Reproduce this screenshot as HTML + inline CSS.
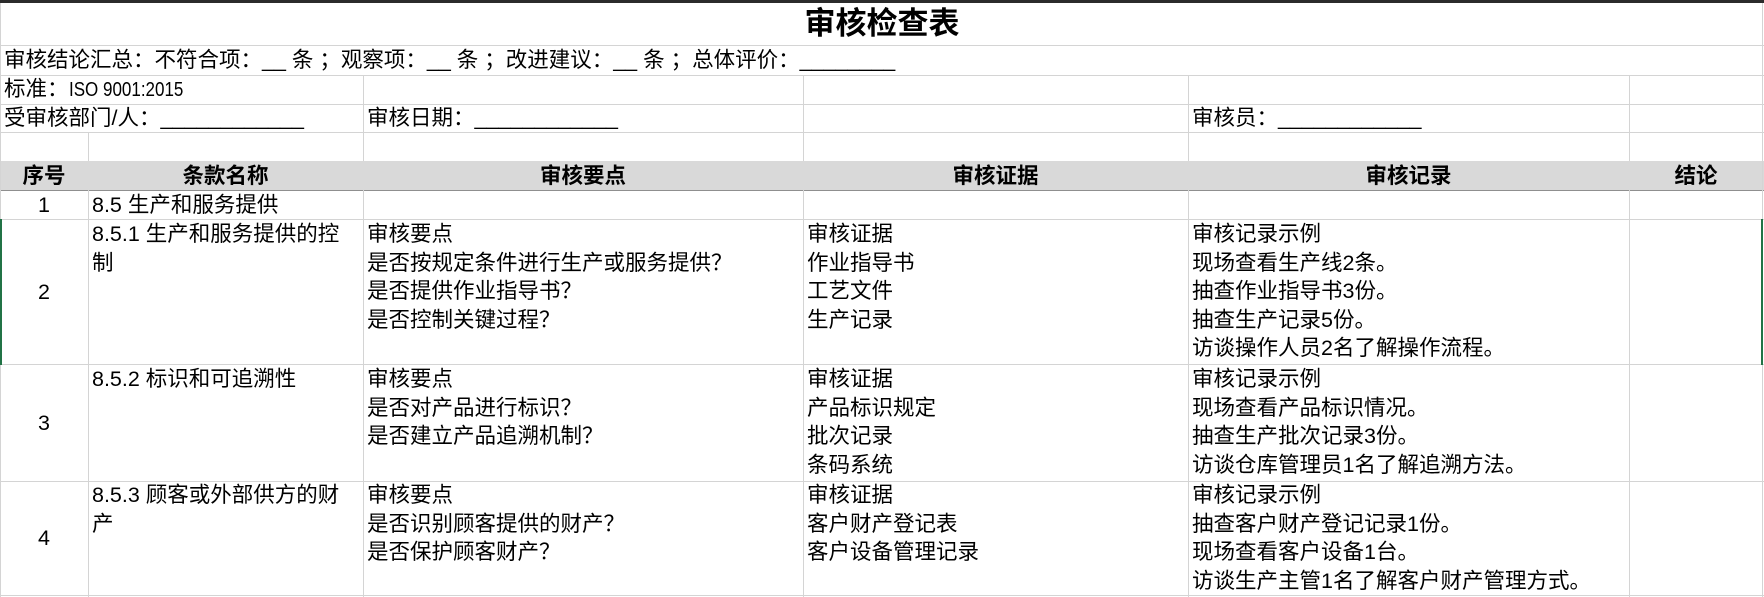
<!DOCTYPE html>
<html><head><meta charset="utf-8"><style>
*{margin:0;padding:0;box-sizing:border-box}
body{width:1764px;height:597px;overflow:hidden;background:#fff;position:relative;font-family:"Liberation Sans","Noto Sans CJK SC",sans-serif;font-size:21.5px;color:#000}
.h{position:absolute;height:1px;background:#d4d4d4}
.v{position:absolute;width:1px;background:#d4d4d4}
.t{position:absolute;white-space:nowrap;line-height:28.6px}
.c{text-align:center}
.b{font-weight:bold}
</style></head><body>
<div style="position:absolute;left:0;top:0;width:1764px;height:3px;background:#2b2b2b"></div>
<div class="t b c" style="left:0;top:4px;width:1764px;line-height:40px;font-size:31px">审核检查表</div>
<div class="h" style="left:0;top:45px;width:1764px"></div>
<div class="h" style="left:0;top:75px;width:1764px"></div>
<div class="h" style="left:0;top:104px;width:1764px"></div>
<div class="h" style="left:0;top:132px;width:1764px"></div>
<div style="position:absolute;left:0;top:161px;width:1764px;height:29px;background:#d9d9d9"></div>
<div class="h" style="left:0;top:190px;width:1764px;background:#8f8f8f"></div>
<div class="h" style="left:0;top:219px;width:1764px"></div>
<div class="h" style="left:0;top:364px;width:1764px"></div>
<div class="h" style="left:0;top:481px;width:1764px"></div>
<div class="h" style="left:0;top:595px;width:1764px"></div>
<div class="v" style="left:0;top:3px;height:594px"></div>
<div class="v" style="left:1762px;top:3px;height:594px"></div>
<div class="v" style="left:363px;top:75px;height:57px"></div>
<div class="v" style="left:803px;top:75px;height:57px"></div>
<div class="v" style="left:1188px;top:75px;height:57px"></div>
<div class="v" style="left:1629px;top:75px;height:57px"></div>
<div class="v" style="left:88px;top:132px;height:29px"></div>
<div class="v" style="left:363px;top:132px;height:29px"></div>
<div class="v" style="left:803px;top:132px;height:29px"></div>
<div class="v" style="left:1188px;top:132px;height:29px"></div>
<div class="v" style="left:1629px;top:132px;height:29px"></div>
<div class="v" style="left:88px;top:190px;height:407px"></div>
<div class="v" style="left:363px;top:190px;height:407px"></div>
<div class="v" style="left:803px;top:190px;height:407px"></div>
<div class="v" style="left:1188px;top:190px;height:407px"></div>
<div class="v" style="left:1629px;top:190px;height:407px"></div>
<div style="position:absolute;left:0;top:219px;width:2px;height:146px;background:#217346"></div>
<div style="position:absolute;left:1761px;top:219px;width:2px;height:146px;background:#217346"></div>

<div class="t" style="left:4px;top:46px">审核结论汇总：不符合项：__ 条 ；观察项：__ 条 ；改进建议：__ 条 ；总体评价：________</div>
<div class="t" style="left:4px;top:75px">标准：<span style="display:inline-block;font-size:20px;transform:scaleX(0.85);transform-origin:left">ISO 9001:2015</span></div>
<div class="t" style="left:4px;top:104px">受审核部门/人：____________</div>
<div class="t" style="left:367px;top:104px">审核日期：____________</div>
<div class="t" style="left:1192px;top:104px">审核员：____________</div>

<div class="t b c" style="left:0;top:162px;width:88px">序号</div>
<div class="t b c" style="left:88px;top:162px;width:275px">条款名称</div>
<div class="t b c" style="left:363px;top:162px;width:440px">审核要点</div>
<div class="t b c" style="left:803px;top:162px;width:385px">审核证据</div>
<div class="t b c" style="left:1188px;top:162px;width:441px">审核记录</div>
<div class="t b c" style="left:1629px;top:162px;width:134px">结论</div>

<div class="t c" style="left:0;top:191px;width:88px">1</div>
<div class="t" style="left:92px;top:191px">8.5 生产和服务提供</div>

<div class="t c" style="left:0;top:278px;width:88px">2</div>
<div class="t" style="left:92px;top:220px">8.5.1 生产和服务提供的控<br>制</div>
<div class="t" style="left:367px;top:220px">审核要点<br>是否按规定条件进行生产或服务提供？<br>是否提供作业指导书？<br>是否控制关键过程？</div>
<div class="t" style="left:807px;top:220px">审核证据<br>作业指导书<br>工艺文件<br>生产记录</div>
<div class="t" style="left:1192px;top:220px">审核记录示例<br>现场查看生产线2条。<br>抽查作业指导书3份。<br>抽查生产记录5份。<br>访谈操作人员2名了解操作流程。</div>

<div class="t c" style="left:0;top:409px;width:88px">3</div>
<div class="t" style="left:92px;top:365px">8.5.2 标识和可追溯性</div>
<div class="t" style="left:367px;top:365px">审核要点<br>是否对产品进行标识？<br>是否建立产品追溯机制？</div>
<div class="t" style="left:807px;top:365px">审核证据<br>产品标识规定<br>批次记录<br>条码系统</div>
<div class="t" style="left:1192px;top:365px">审核记录示例<br>现场查看产品标识情况。<br>抽查生产批次记录3份。<br>访谈仓库管理员1名了解追溯方法。</div>

<div class="t c" style="left:0;top:524px;width:88px">4</div>
<div class="t" style="left:92px;top:481px">8.5.3 顾客或外部供方的财<br>产</div>
<div class="t" style="left:367px;top:481px">审核要点<br>是否识别顾客提供的财产？<br>是否保护顾客财产？</div>
<div class="t" style="left:807px;top:481px">审核证据<br>客户财产登记表<br>客户设备管理记录</div>
<div class="t" style="left:1192px;top:481px">审核记录示例<br>抽查客户财产登记记录1份。<br>现场查看客户设备1台。<br>访谈生产主管1名了解客户财产管理方式。</div>
</body></html>
